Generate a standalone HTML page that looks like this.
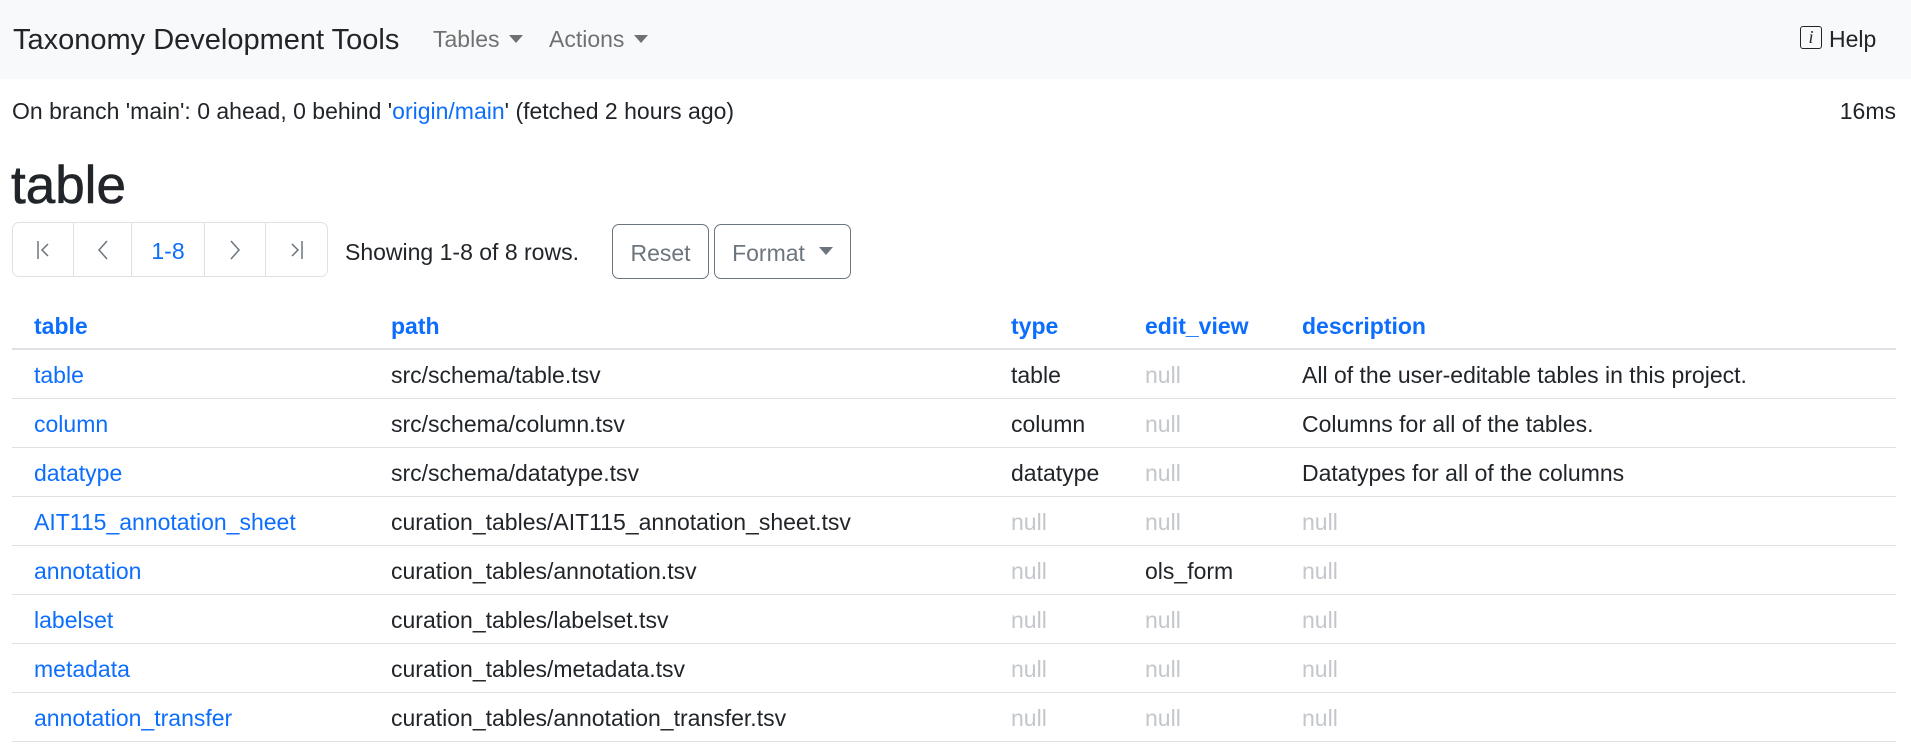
<!DOCTYPE html>
<html><head><meta charset="utf-8">
<style>
*{box-sizing:border-box;margin:0;padding:0}
body{width:1911px;height:755px;overflow:hidden;background:#fff;font-family:"Liberation Sans",Arial,sans-serif;font-size:23px;color:#212529;position:relative}
.a{position:absolute;white-space:nowrap}
.nav{position:absolute;left:0;top:0;width:1911px;height:79px;background:#f8f9fa}
.muted{color:rgba(0,0,0,.55)}
.caret{display:inline-block;width:0;height:0;border-left:7px solid transparent;border-right:7px solid transparent;border-top:8px solid rgba(0,0,0,.55);vertical-align:middle;margin-left:10px;margin-top:-4px}
.link{color:#0d6efd}
.pag{position:absolute;left:12px;top:222px;width:316px;height:55px;border:1px solid #dee2e6;border-radius:7px;display:flex}
.pag div{height:100%;display:flex;align-items:center;justify-content:center;border-right:1px solid #dee2e6;color:#6c757d}
.pag div:last-child{border-right:none}
.btn{position:absolute;top:224px;height:55px;border:1.5px solid #6c757d;border-radius:7px;color:#6c757d;display:flex;align-items:center;justify-content:center;padding-top:3px}
table{position:absolute;left:12px;top:300px;width:1884px;border-collapse:collapse}
td,th{height:49px;border-bottom:1.5px solid #dee2e6;text-align:left;padding:4px 0 0 0;vertical-align:middle;font-weight:normal}
th{font-weight:bold;color:#0d6efd;border-bottom:2px solid #dee2e6}
.n{color:#c3c7cb}
</style></head><body>
<div class="nav"></div>
<div class="a" style="left:13px;top:22px;font-size:29px;line-height:36px">Taxonomy Development Tools</div>
<div class="a muted" style="left:433px;top:25px;line-height:28px">Tables<span class="caret"></span></div>
<div class="a muted" style="left:549px;top:25px;line-height:28px">Actions<span class="caret"></span></div>
<div class="a" style="left:1800px;top:26px;width:22px;height:23px;border:1.5px solid #212529;border-radius:3px;font-family:'Liberation Serif',serif;font-style:italic;font-size:18px;line-height:21px;text-align:center">i</div>
<div class="a" style="left:1829px;top:25px;line-height:28px">Help</div>
<div class="a" style="left:12px;top:97px;line-height:28px">On branch 'main': 0 ahead, 0 behind '<span class="link">origin/main</span>' (fetched 2 hours ago)</div>
<div class="a" style="right:15px;top:97px;line-height:28px">16ms</div>
<div class="a" style="left:11px;top:155px;font-size:53px;line-height:62px;-webkit-text-stroke:0.6px #212529">table</div>
<div class="pag">
<div style="width:61px"><svg width="16" height="22" viewBox="0 0 16 22" fill="none" stroke="#6c757d" stroke-width="1.5"><path d="M3 2v18M13 5l-6 6 6 6"/></svg></div>
<div style="width:58px"><svg width="14" height="24" viewBox="0 0 14 24" fill="none" stroke="#6c757d" stroke-width="1.5"><path d="M11 3l-8 9 8 9"/></svg></div>
<div style="width:73px;color:#0d6efd;padding-top:3px">1-8</div>
<div style="width:61px"><svg width="14" height="24" viewBox="0 0 14 24" fill="none" stroke="#6c757d" stroke-width="1.5"><path d="M3 3l8 9-8 9"/></svg></div>
<div style="width:61px"><svg width="16" height="22" viewBox="0 0 16 22" fill="none" stroke="#6c757d" stroke-width="1.5"><path d="M3 5l6 6-6 6M13 2v18"/></svg></div>
</div>
<div class="a" style="left:345px;top:238px;line-height:28px">Showing 1-8 of 8 rows.</div>
<div class="btn" style="left:612px;width:97px">Reset</div>
<div class="btn" style="left:714px;width:137px">Format<span class="caret" style="border-top-color:#6c757d;margin-left:14px"></span></div>
<table>
<colgroup><col style="width:379px"><col style="width:620px"><col style="width:134px"><col style="width:157px"><col></colgroup>
<tr><th style="padding-left:22px">table</th><th>path</th><th>type</th><th>edit_view</th><th>description</th></tr>
<tr><td style="padding-left:22px" class="link">table</td><td>src/schema/table.tsv</td><td>table</td><td class="n">null</td><td>All of the user-editable tables in this project.</td></tr>
<tr><td style="padding-left:22px" class="link">column</td><td>src/schema/column.tsv</td><td>column</td><td class="n">null</td><td>Columns for all of the tables.</td></tr>
<tr><td style="padding-left:22px" class="link">datatype</td><td>src/schema/datatype.tsv</td><td>datatype</td><td class="n">null</td><td>Datatypes for all of the columns</td></tr>
<tr><td style="padding-left:22px" class="link">AIT115_annotation_sheet</td><td>curation_tables/AIT115_annotation_sheet.tsv</td><td class="n">null</td><td class="n">null</td><td class="n">null</td></tr>
<tr><td style="padding-left:22px" class="link">annotation</td><td>curation_tables/annotation.tsv</td><td class="n">null</td><td>ols_form</td><td class="n">null</td></tr>
<tr><td style="padding-left:22px" class="link">labelset</td><td>curation_tables/labelset.tsv</td><td class="n">null</td><td class="n">null</td><td class="n">null</td></tr>
<tr><td style="padding-left:22px" class="link">metadata</td><td>curation_tables/metadata.tsv</td><td class="n">null</td><td class="n">null</td><td class="n">null</td></tr>
<tr><td style="padding-left:22px" class="link">annotation_transfer</td><td>curation_tables/annotation_transfer.tsv</td><td class="n">null</td><td class="n">null</td><td class="n">null</td></tr>
</table>
</body></html>
